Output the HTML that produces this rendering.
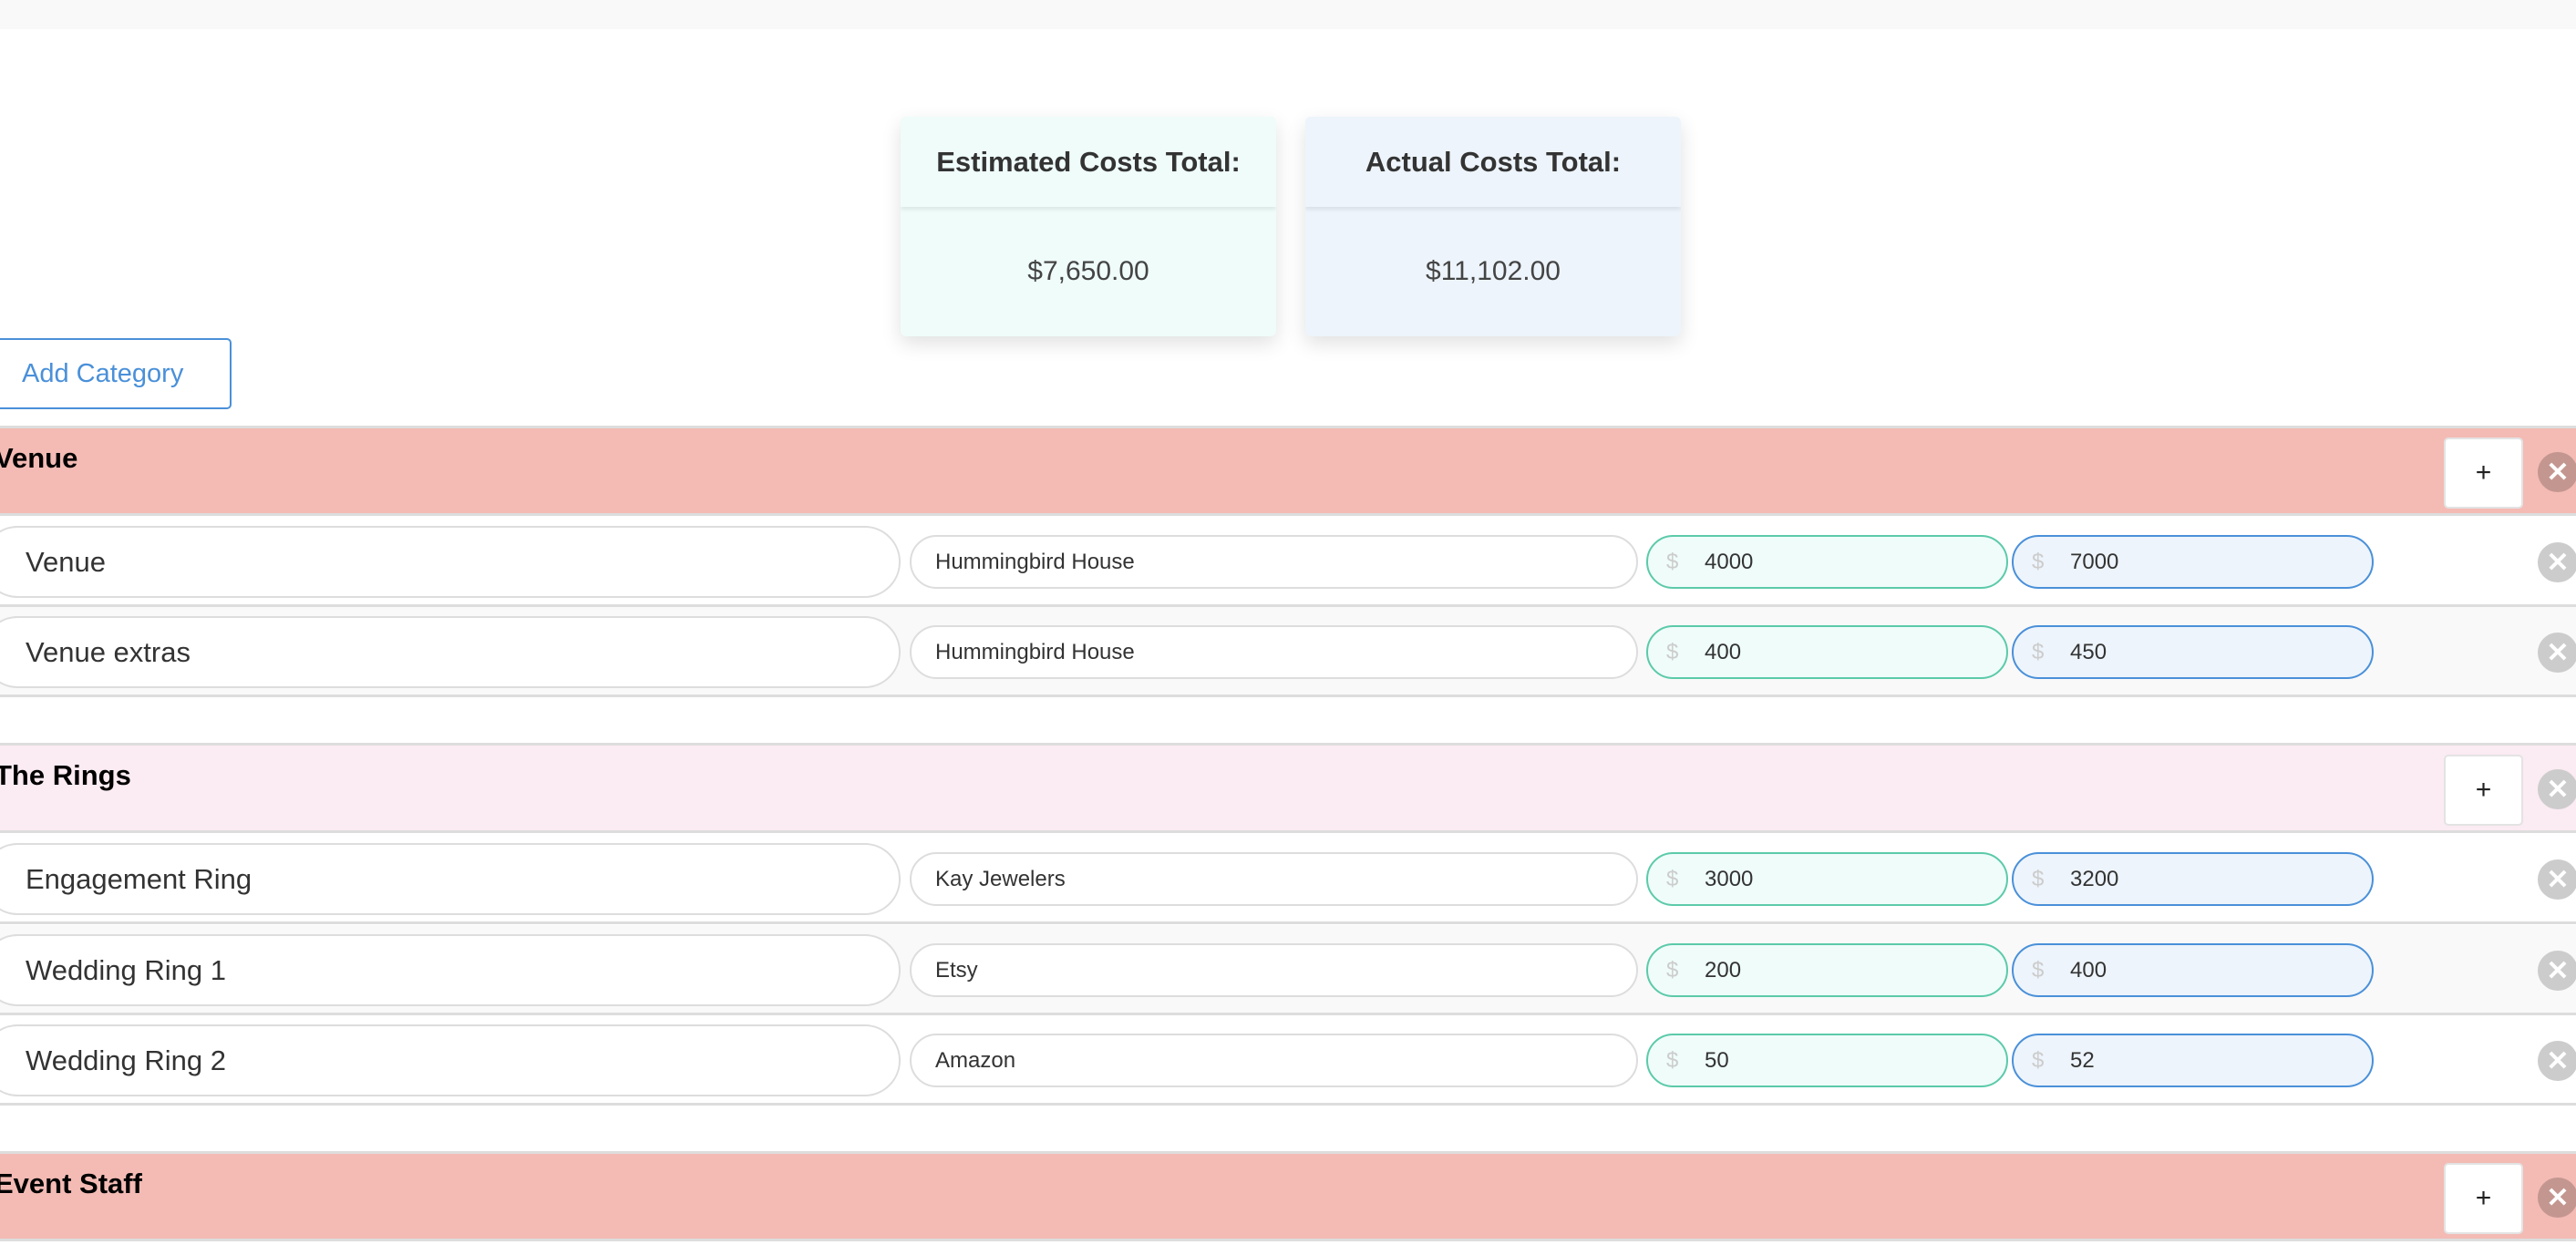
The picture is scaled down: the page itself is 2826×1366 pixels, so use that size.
<!DOCTYPE html>
<html><head><meta charset="utf-8"><style>
*{box-sizing:border-box;margin:0;padding:0}
body{width:2826px;height:1366px;overflow:hidden;background:#fff;font-family:"Liberation Sans",sans-serif;position:relative;color:#333}
.a{position:absolute}
.top{left:0;top:0;width:2826px;height:32px;background:#f9f9f9}
.card{width:412px;height:241px;top:128px;border-radius:6px;box-shadow:0 8px 22px rgba(0,0,0,.12);overflow:hidden}
.card .h{height:99px;display:flex;align-items:center;justify-content:center;font-weight:bold;font-size:31px;color:#333;box-shadow:0 3px 4px rgba(0,0,0,.08);position:relative}
.card .v{height:142px;display:flex;align-items:center;justify-content:center;font-size:30px;color:#444}
.btn{left:-6px;top:371px;width:260px;height:78px;border:2px solid #4a90d9;border-radius:5px;color:#4a90d9;font-size:29px;display:flex;align-items:center;padding-left:28px}
.hdr{left:0;width:2826px;height:99px;border-top:3px solid #ddd;border-bottom:3px solid #ddd}
.hdr .t{position:absolute;left:-6px;top:15px;font-weight:bold;font-size:31px;color:#000}
.plus{position:absolute;left:2681px;top:10px;width:87px;height:78px;background:#fff;border:2px solid #e3e3e3;border-radius:5px;font-size:30px;display:flex;align-items:center;justify-content:center;color:#222}
.x{position:absolute;left:2784px;width:44px;height:44px;border-radius:50%;color:#fff;font-size:30px;font-weight:bold;display:flex;align-items:center;justify-content:center}
.row{left:0;width:2826px;height:99px;border-bottom:3px solid #ddd}
.in{position:absolute;border:2px solid #ddd;background:#fff;display:flex;align-items:center}
.name{left:-20px;top:10px;width:1008px;height:79px;border-radius:40px;padding-left:46px;font-size:31px;color:#333}
.vend{left:998px;top:20px;width:799px;height:59px;border-radius:30px;padding-left:26px;font-size:24px;color:#333}
.est{left:1806px;top:20px;width:397px;height:59px;border-radius:30px;border-color:#5ccaa9;background:#effcfa;font-size:24px}
.act{left:2207px;top:20px;width:397px;height:59px;border-radius:30px;border-color:#4a90d9;background:#edf4fb;font-size:24px}
.d{color:#ccc;margin-left:20px;width:42px}
</style></head><body>
<div class="a top"></div>
<div class="a card" style="left:988px;background:#effcfa"><div class="h">Estimated Costs Total:</div><div class="v">$7,650.00</div></div>
<div class="a card" style="left:1432px;background:#edf4fb"><div class="h">Actual Costs Total:</div><div class="v">$11,102.00</div></div>
<div class="a btn">Add Category</div>

<div class="a hdr" style="top:467px;background:#f3bbb4"><div class="t">Venue</div><div class="plus">+</div><div class="x" style="top:26px;background:#c49690">✕</div></div>
<div class="a row" style="top:567px;background:#fff"><div class="in name">Venue</div><div class="in vend">Hummingbird House</div><div class="in est"><span class="d">$</span>4000</div><div class="in act"><span class="d">$</span>7000</div><div class="x" style="top:28px;background:#ccc">✕</div></div>
<div class="a row" style="top:666px;background:#f9f9f9"><div class="in name">Venue extras</div><div class="in vend">Hummingbird House</div><div class="in est"><span class="d">$</span>400</div><div class="in act"><span class="d">$</span>450</div><div class="x" style="top:28px;background:#ccc">✕</div></div>

<div class="a hdr" style="top:815px;background:#fbebf2"><div class="t">The Rings</div><div class="plus">+</div><div class="x" style="top:26px;background:#ccc">✕</div></div>
<div class="a row" style="top:915px;background:#fff"><div class="in name">Engagement Ring</div><div class="in vend">Kay Jewelers</div><div class="in est"><span class="d">$</span>3000</div><div class="in act"><span class="d">$</span>3200</div><div class="x" style="top:28px;background:#ccc">✕</div></div>
<div class="a row" style="top:1015px;background:#f9f9f9"><div class="in name">Wedding Ring 1</div><div class="in vend">Etsy</div><div class="in est"><span class="d">$</span>200</div><div class="in act"><span class="d">$</span>400</div><div class="x" style="top:28px;background:#ccc">✕</div></div>
<div class="a row" style="top:1114px;background:#fff"><div class="in name">Wedding Ring 2</div><div class="in vend">Amazon</div><div class="in est"><span class="d">$</span>50</div><div class="in act"><span class="d">$</span>52</div><div class="x" style="top:28px;background:#ccc">✕</div></div>

<div class="a hdr" style="top:1263px;background:#f3bbb4"><div class="t">Event Staff</div><div class="plus">+</div><div class="x" style="top:26px;background:#c49690">✕</div></div>
</body></html>
